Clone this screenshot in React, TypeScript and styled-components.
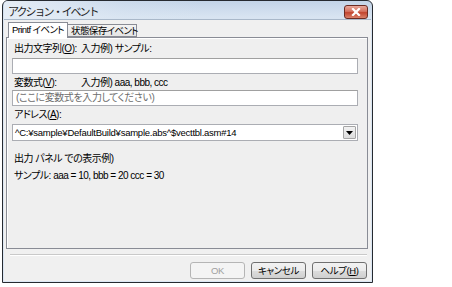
import React from "react";
import styled, { createGlobalStyle } from "styled-components";

const FONT = `"Liberation Sans", "Noto Sans CJK JP", sans-serif`;

const Global = createGlobalStyle`
  html, body { margin: 0; padding: 0; background: #ffffff; }
  body {
    font-family: ${FONT};
    font-size: 10px;
    color: #000;
    font-feature-settings: "palt";
  }
`;

const Window = styled.div`
  margin-left: 2px;
  width: 371px;
  height: 283px;
  box-sizing: border-box;
  border: 1px solid #262a30;
  border-radius: 6px 6px 0 0;
  background: linear-gradient(180deg, #c3d4e8 0px, #d8e4f1 16px, #dbe6f3 100%);
  display: flex;
  flex-direction: column;
  padding: 0 1px 1px 1px;
  overflow: hidden;
`;

const TitleBar = styled.div`
  height: 18px;
  display: flex;
  align-items: center;
  justify-content: space-between;
  padding: 0 3px 0 4px;
  background: linear-gradient(90deg, rgba(232,239,247,0.9) 0px, rgba(220,231,243,0.3) 120px, rgba(0,0,0,0) 200px);
`;

const Title = styled.span`
  font-family: "Noto Sans CJK JP", sans-serif;
  font-feature-settings: normal;
  font-size: 11px;
  line-height: 14px;
  color: #1e1e1e;
  letter-spacing: -2px;
  margin-top: 1px;
`;

const CloseButton = styled.div`
  width: 22px;
  height: 12px;
  margin-top: 4px;
  border: 1px solid #6b2b22;
  border-radius: 3px;
  background: linear-gradient(180deg, #e9a99c 0%, #d4715f 45%, #c2452f 55%, #d9806a 100%);
  display: flex;
  align-items: center;
  justify-content: center;
`;

const Client = styled.div`
  flex: 1;
  background: #f0f0f0;
  border-top: 1px solid #a9b8c9;
  padding: 2px 3px 0 2px;
  display: flex;
  flex-direction: column;
`;

const TabStrip = styled.div`
  display: flex;
  align-items: flex-end;
  height: 15px;
  padding-left: 2px;
  position: relative;
  z-index: 1;
`;

const Tab = styled.div<{ $active?: boolean }>`
  box-sizing: border-box;
  height: ${(p) => (p.$active ? 16 : 13)}px;
  width: ${(p) => (p.$active ? 60 : 70)}px;
  border: 1px solid #898c95;
  border-bottom: ${(p) => (p.$active ? "none" : "1px solid #898c95")};
  margin-bottom: ${(p) => (p.$active ? -1 : 0)}px;
  margin-left: ${(p) => (p.$active ? 0 : -1)}px;
  background: ${(p) => (p.$active ? "#ffffff" : "linear-gradient(180deg, #f3f3f3, #e5e5e5)")};
  padding-left: 3px;
  font-size: 9.5px;
  line-height: ${(p) => (p.$active ? 14 : 11)}px;
  white-space: nowrap;
  letter-spacing: -0.6px;
  z-index: ${(p) => (p.$active ? 2 : 1)};
`;

const Panel = styled.div`
  box-sizing: border-box;
  height: 212px;
  border: 1px solid #898c95;
  background: #efefef;
  box-shadow: inset 1px 1px 0 #ffffff;
  padding: 0 5px 0 5px;
  display: flex;
  flex-direction: column;
`;

const LabelRow = styled.div<{ $mt: number }>`
  display: grid;
  grid-template-columns: 67px 1fr;
  margin-top: ${(p) => p.$mt}px;
  padding-left: 2px;
  height: 13px;
  line-height: 13px;
  font-size: 10px;
  letter-spacing: -0.5px;
  white-space: nowrap;
`;

const Text = styled.span``;

const Key = styled.span`
  text-decoration: underline;
`;

const TextBox = styled.div<{ $mt: number }>`
  box-sizing: border-box;
  margin-top: ${(p) => p.$mt}px;
  width: 346px;
  height: 16px;
  border: 1px solid #abadb3;
  border-top-color: #a0a0a0;
  background: #ffffff;
  padding-left: 3px;
  line-height: 14px;
  font-size: 10px;
  letter-spacing: -0.4px;
  color: #6d6d6d;
  white-space: nowrap;
`;

const Combo = styled.div<{ $mt: number }>`
  box-sizing: border-box;
  margin-top: ${(p) => p.$mt}px;
  width: 346px;
  height: 17px;
  border: 1px solid #abadb3;
  background: #ffffff;
  display: flex;
  align-items: center;
  justify-content: space-between;
  padding: 0 1px 0 2px;
`;

const ComboText = styled.span`
  font-family: "Liberation Sans", sans-serif;
  font-size: 9.5px;
  letter-spacing: -0.25px;
  line-height: 14px;
  white-space: nowrap;
`;

const DropButton = styled.div`
  box-sizing: border-box;
  width: 13px;
  height: 13px;
  border: 1px solid #a5a5a5;
  border-radius: 1px;
  background: linear-gradient(180deg, #f2f2f2, #dcdcdc);
  display: flex;
  align-items: center;
  justify-content: center;
`;

const Separator = styled.div`
  margin: 5px 1px 0 4px;
  height: 0;
  border-top: 1px solid #c9c9c9;
  border-bottom: 1px solid #ffffff;
`;

const ButtonRow = styled.div`
  display: flex;
  justify-content: flex-end;
  gap: 6px;
  margin-top: 6px;
  padding-right: 1px;
`;

const Button = styled.div<{ $disabled?: boolean }>`
  box-sizing: border-box;
  width: 55px;
  height: 17px;
  border: 1px solid ${(p) => (p.$disabled ? "#b5b5b5" : "#707070")};
  border-radius: 3px;
  background: ${(p) =>
    p.$disabled
      ? "#f4f4f4"
      : "linear-gradient(180deg, #f2f2f2 0%, #ebebeb 50%, #dddddd 51%, #cfcfcf 100%)"};
  color: ${(p) => (p.$disabled ? "#a0a0a0" : "#000")};
  font-size: 9.5px;
  letter-spacing: -0.4px;
  line-height: 15px;
  text-align: center;
  white-space: nowrap;
`;

export default function App() {
  return (
    <>
      <Global />
      <Window>
        <TitleBar>
          <Title>アクション・イベント</Title>
          <CloseButton>
            <svg width="10" height="8" viewBox="0 0 10 8">
              <path d="M2 1 L8 7 M8 1 L2 7" stroke="#ffffff" strokeWidth="2.2" strokeLinecap="square" />
            </svg>
          </CloseButton>
        </TitleBar>
        <Client>
          <TabStrip>
            <Tab $active>Printf イベント</Tab>
            <Tab>状態保存イベント</Tab>
          </TabStrip>
          <Panel>
            <LabelRow $mt={4}>
              <Text>
                出力文字列(<Key>O</Key>):
              </Text>
              <Text>入力例) サンプル:</Text>
            </LabelRow>
            <TextBox $mt={3} />
            <LabelRow $mt={2}>
              <Text>
                変数式(<Key>V</Key>):
              </Text>
              <Text>入力例) aaa, bbb, ccc</Text>
            </LabelRow>
            <TextBox $mt={1}>(ここに変数式を入力してください)</TextBox>
            <LabelRow $mt={2}>
              <Text>
                アドレス(<Key>A</Key>):
              </Text>
            </LabelRow>
            <Combo $mt={3}>
              <ComboText>^C:¥sample¥DefaultBuild¥sample.abs^$vecttbl.asm#14</ComboText>
              <DropButton>
                <svg width="7" height="4" viewBox="0 0 7 4">
                  <path d="M0 0 H7 L3.5 4 Z" fill="#000" />
                </svg>
              </DropButton>
            </Combo>
            <LabelRow $mt={11}>
              <Text>出力 パネル での表示例)</Text>
            </LabelRow>
            <LabelRow $mt={4}>
              <Text>サンプル: aaa = 10, bbb = 20 ccc = 30</Text>
            </LabelRow>
          </Panel>
          <Separator />
          <ButtonRow>
            <Button $disabled>OK</Button>
            <Button>キャンセル</Button>
            <Button>
              ヘルプ(<Key>H</Key>)
            </Button>
          </ButtonRow>
        </Client>
      </Window>
    </>
  );
}
